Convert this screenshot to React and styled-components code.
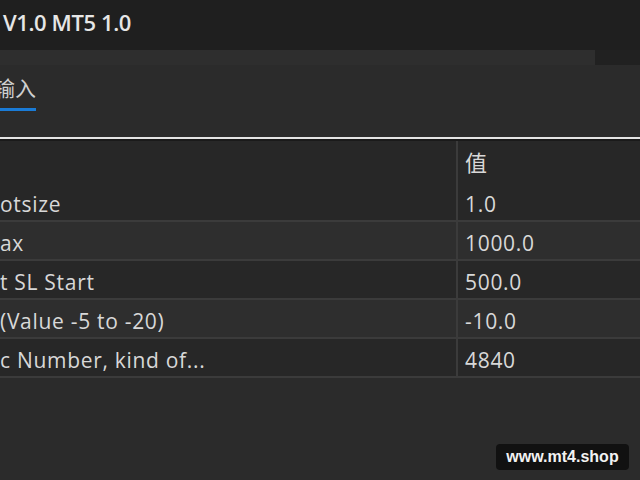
import React from "react";
import styled, { createGlobalStyle } from "styled-components";

const GlobalStyle = createGlobalStyle`
  html, body {
    margin: 0;
    padding: 0;
    background: #2b2b2b;
    overflow: hidden;
  }
  * {
    box-sizing: border-box;
  }
`;

const rows = [
  { name: "otsize", value: "1.0" },
  { name: "ax", value: "1000.0" },
  { name: "t SL Start", value: "500.0" },
  { name: "(Value -5 to -20)", value: "-10.0" },
  { name: "c Number, kind of...", value: "4840" },
];

export default function App() {
  return (
    <>
      <GlobalStyle />
      <Screen>
        <TitleBar>
          <Title>V1.0 MT5 1.0</Title>
        </TitleBar>
        <Strip>
          <StripPanel />
          <StripCorner />
        </Strip>
        <TabBar>
          <Tab>
            <TabLabel>输入</TabLabel>
            <TabUnderline />
          </Tab>
        </TabBar>
        <Divider />
        <Table>
          <Row $header>
            <NameCell />
            <ValueCell $header>值</ValueCell>
          </Row>
          {rows.map((row, index) => (
            <Row key={index} $alt={index % 2 === 1}>
              <NameCell>{row.name}</NameCell>
              <ValueCell>{row.value}</ValueCell>
            </Row>
          ))}
        </Table>
        <Watermark>www.mt4.shop</Watermark>
      </Screen>
    </>
  );
}

const Screen = styled.div`
  position: relative;
  width: 640px;
  height: 480px;
  display: flex;
  flex-direction: column;
  background: #2b2b2b;
  overflow: hidden;
  font-family: "Open Sans", "Noto Sans CJK SC", sans-serif;
  color: #d6d6d6;
`;

const TitleBar = styled.div`
  height: 50px;
  flex: none;
  display: flex;
  align-items: flex-start;
  padding: 7px 0 0 3px;
  background: #1f1f1f;
`;

const Title = styled.div`
  font-size: 22px;
  line-height: 30px;
  font-weight: 600;
  letter-spacing: -0.4px;
  color: #e6e6e6;
`;

const Strip = styled.div`
  height: 15px;
  flex: none;
  display: flex;
`;

const StripPanel = styled.div`
  width: 595px;
  background: #2e2e2e;
`;

const StripCorner = styled.div`
  flex: 1;
  background: #212121;
`;

const TabBar = styled.div`
  height: 72px;
  flex: none;
  display: flex;
  background: #2b2b2b;
`;

const Tab = styled.div`
  margin-left: -6px;
  width: 42px;
  display: flex;
  flex-direction: column;
`;

const TabLabel = styled.div`
  padding-top: 8px;
  font-family: "Noto Sans CJK SC", sans-serif;
  font-size: 21px;
  line-height: 28px;
  color: #cfcfcf;
`;

const TabUnderline = styled.div`
  margin-top: 7px;
  height: 3px;
  background: #1a7bd6;
`;

const Divider = styled.div`
  height: 4px;
  flex: none;
  border-top: 2px solid #e4e4e4;
  background: #1a1a1a;
`;

const Table = styled.div`
  display: flex;
  flex-direction: column;
  background: #272727;
`;

const Row = styled.div`
  height: ${({ $header }) => ($header ? "42px" : "39px")};
  display: grid;
  grid-template-columns: 458px 1fr;
  background: ${({ $alt }) => ($alt ? "#2e2e2e" : "#272727")};
  border-bottom: ${({ $header }) => ($header ? "none" : "2px solid #3b3b3b")};
`;

const NameCell = styled.div`
  display: flex;
  align-items: center;
  padding-top: 4px;
  font-size: 21px;
  letter-spacing: 0.7px;
  white-space: nowrap;
  overflow: hidden;
  color: #d8d8d8;
  border-right: 2px solid #3b3b3b;
`;

const ValueCell = styled.div`
  display: flex;
  align-items: center;
  padding: ${({ $header }) => ($header ? "0 0 2px 7px" : "4px 0 0 7px")};
  font-size: ${({ $header }) => ($header ? "22px" : "21px")};
  font-family: ${({ $header }) =>
    $header ? '"Noto Sans CJK SC", sans-serif' : '"Open Sans", sans-serif'};
  letter-spacing: 0.7px;
  color: #d8d8d8;
`;

const Watermark = styled.div`
  position: absolute;
  left: 496px;
  top: 444px;
  width: 133px;
  height: 26px;
  display: flex;
  align-items: center;
  justify-content: center;
  border-radius: 4px;
  background: #111111;
  font-family: "Liberation Sans", Arial, sans-serif;
  font-size: 16px;
  font-weight: 700;
  color: #f2f2f2;
`;
